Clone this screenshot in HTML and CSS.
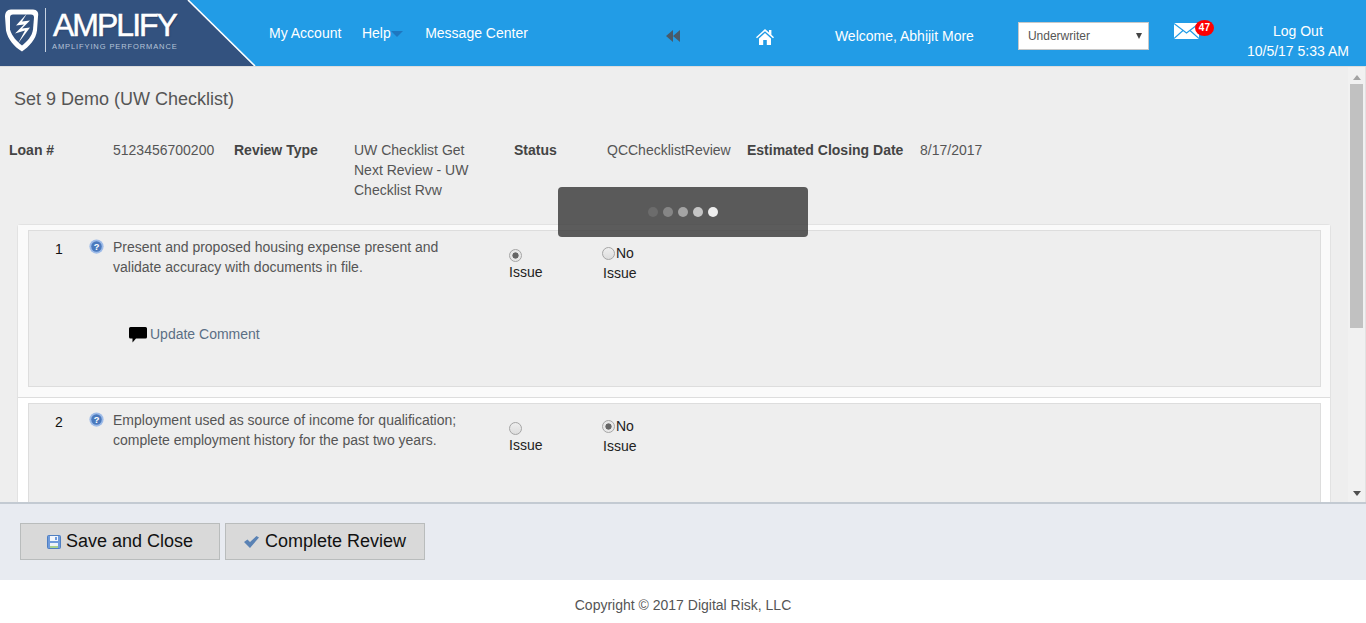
FILE: index.html
```html
<!DOCTYPE html>
<html lang="en">
<head>
<meta charset="utf-8">
<title>Set 9 Demo (UW Checklist)</title>
<link rel="stylesheet" href="styles.css">
</head>
<body>
<header class="topbar">
  <div class="brand">
    <svg class="brand-bg" width="256" height="66" viewBox="0 0 256 66" aria-hidden="true">
      <polygon points="0,0 188,0 254,66 0,66" fill="#33527f"/>
      <line x1="188" y1="0" x2="255" y2="66" stroke="#fff" stroke-width="1.6"/>
    </svg>
    <svg class="shield" width="34" height="43" viewBox="1 3 34 42" aria-hidden="true">
      <path d="M7 3 H29 C33 3 35 6 34 10 L33 24 C32 33 25 40 18 45 C10 40 4 33 2 24 L1 10 C1 6 3 3 7 3 Z" fill="#fff"/>
      <path d="M9 8 H27 C29 8 30 9 30 11 L29 23 C28 30 23 35 18 39 C13 35 8 30 6 23 L6 11 C6 9 7 8 9 8 Z" fill="#33527f"/>
      <path d="M23 7 L12 19 L20 18 L11 27 L21 24 L14 37 L26 21 L18 22 L26 14 L18 15 Z" fill="#fff"/>
    </svg>
    <span class="brand-rule"></span>
    <div class="brand-text">
      <span class="brand-name">AMPLIFY</span>
      <span class="brand-tag">AMPLIFYING PERFORMANCE</span>
    </div>
  </div>
  <nav class="nav">
    <a class="nav-link">My Account</a>
    <a class="nav-link nav-help">Help<span class="caret"></span></a>
    <a class="nav-link">Message Center</a>
  </nav>
  <svg class="rewind" width="14" height="12" viewBox="0 0 14 12" aria-hidden="true">
    <path d="M7 0 V12 L0 6 Z M14 0 V12 L7 6 Z" fill="#4a5a68"/>
  </svg>
  <svg class="home" width="18" height="16" viewBox="0 0 18 16" aria-hidden="true">
    <path d="M9 0 L13 3.6 V1 H15.4 V5.8 L18 8.2 L17 9.2 L9 2.2 L1 9.2 L0 8.2 Z M3 9.4 L9 4 L15 9.4 V16 H10.8 V11 H7.2 V16 H3 Z" fill="#fff"/>
  </svg>
  <span class="welcome">Welcome, Abhijit More</span>
  <div class="role"><span>Underwriter</span><span class="role-arrow"></span></div>
  <div class="mail">
    <svg width="25" height="16" viewBox="0 0 25 16" aria-hidden="true">
      <rect width="25" height="16" fill="#fff"/>
      <path d="M0 0.5 L12.5 10 L25 0.5 M0 15.5 L9 7.5 M25 15.5 L16 7.5" fill="none" stroke="#229ce6" stroke-width="1.2"/>
    </svg>
    <span class="badge">47</span>
  </div>
  <div class="session">
    <span>Log Out</span>
    <span>10/5/17 5:33 AM</span>
  </div>
</header>

<main class="workspace">
  <div class="content">
    <h1 class="title">Set 9 Demo (UW Checklist)</h1>
    <div class="meta">
      <b class="meta-loan">Loan #</b>
      <span class="meta-num">5123456700200</span>
      <b class="meta-type">Review Type</b>
      <span class="meta-typeval">UW Checklist Get Next Review - UW Checklist Rvw</span>
      <b class="meta-status">Status</b>
      <span class="meta-statusval">QCChecklistReview</span>
      <b class="meta-close">Estimated Closing Date</b>
      <span>8/17/2017</span>
    </div>
    <section class="panel">
      <div class="row-wrap first">
        <article class="item">
          <span class="num">1</span>
          <svg class="help" width="15" height="15" viewBox="0 0 16 16" aria-hidden="true"><circle cx="8" cy="8" r="7.6" fill="#9dbbe8"/><circle cx="8" cy="8" r="5.6" fill="#4a79bd"/><text x="8" y="11.5" text-anchor="middle" class="help-q">?</text></svg>
          <p class="question">Present and proposed housing expense present and validate accuracy with documents in file.</p>
          <div class="choice choice-issue"><span class="radio on"></span><span class="choice-label">Issue</span></div>
          <div class="choice choice-no"><span class="radio"></span><span class="no-word">No</span><span class="choice-label alt">Issue</span></div>
          <a class="comment">
            <svg width="18" height="17" viewBox="0 0 18 17" aria-hidden="true"><path d="M1.5 1 H16.5 A1.5 1.5 0 0 1 18 2.5 V11 A1.5 1.5 0 0 1 16.5 12.5 H7 L3.5 16.5 V12.5 H1.5 A1.5 1.5 0 0 1 0 11 V2.5 A1.5 1.5 0 0 1 1.5 1 Z" fill="#000"/></svg>
            Update Comment
          </a>
        </article>
      </div>
      <div class="row-wrap">
        <article class="item">
          <span class="num">2</span>
          <svg class="help" width="15" height="15" viewBox="0 0 16 16" aria-hidden="true"><circle cx="8" cy="8" r="7.6" fill="#9dbbe8"/><circle cx="8" cy="8" r="5.6" fill="#4a79bd"/><text x="8" y="11.5" text-anchor="middle" class="help-q">?</text></svg>
          <p class="question">Employment used as source of income for qualification; complete employment history for the past two years.</p>
          <div class="choice choice-issue"><span class="radio"></span><span class="choice-label">Issue</span></div>
          <div class="choice choice-no"><span class="radio on"></span><span class="no-word">No</span><span class="choice-label alt">Issue</span></div>
        </article>
      </div>
    </section>
  </div>
  <div class="scrollbar">
    <span class="arrow up"></span>
    <span class="thumb"></span>
    <span class="arrow down"></span>
  </div>
  <div class="loader">
    <i class="dot d1"></i><i class="dot d2"></i><i class="dot d3"></i><i class="dot d4"></i><i class="dot d5"></i>
  </div>
</main>

<div class="actions">
  <button class="btn" type="button">
    <svg class="btn-save" width="14" height="14" viewBox="0 0 14 14" aria-hidden="true"><rect x="0.5" y="0.5" width="13" height="13" rx="1" fill="#6f9bdb" stroke="#4f7fc2"/><rect x="3" y="1" width="8" height="5" fill="#f2f6fb"/><rect x="8" y="2" width="2" height="3" fill="#6f9bdb"/><rect x="3" y="8" width="8" height="5" fill="#eef3f8"/><rect x="3" y="11" width="8" height="2" fill="#a8d08d"/></svg>
    Save and Close
  </button>
  <button class="btn" type="button">
    <svg width="15" height="12" viewBox="0 0 15 12" aria-hidden="true"><path d="M0 6 L3.5 3.5 L6 6 L12.5 0 L15 1.5 L6 12 Z" fill="#5a82b4"/></svg>
    Complete Review
  </button>
</div>
<footer class="copyright">Copyright © 2017 Digital Risk, LLC</footer>
</body>
</html>
```
FILE: styles.css
```css
* { box-sizing: border-box; }
html, body { height: 100%; }
body {
  margin: 0;
  height: 623px;
  overflow: hidden;
  display: flex;
  flex-direction: column;
  font-family: "Liberation Sans", Arial, sans-serif;
  font-size: 14px;
  color: #555;
  background: #fff;
}
.topbar {
  flex: 0 0 66px;
  display: flex;
  align-items: center;
  background: #229ce6;
  color: #fff;
}
.brand {
  position: relative;
  flex: 0 0 256px;
  height: 66px;
  display: flex;
  align-items: center;
  padding: 0 0 6px 5px;
}
.brand-bg { position: absolute; left: 0; top: 0; }
.shield { position: relative; flex: none; }
.brand-rule {
  position: relative;
  width: 1px;
  height: 44px;
  margin-left: 6px;
  background: #c8d3e2;
}
.brand-text {
  position: relative;
  display: flex;
  flex-direction: column;
  margin-left: 6px;
}
.brand-name {
  margin-left: 1px;
  font-size: 32px;
  line-height: 31px;
  letter-spacing: -2px;
  color: #fff;
  -webkit-text-stroke: 0.5px #fff;
  text-shadow: 1px 1px 1px rgba(20, 40, 80, .5);
}
.brand-tag {
  font-size: 7.5px;
  line-height: 9px;
  margin-top: 1px;
  letter-spacing: 0.9px;
  color: #b6c4d8;
  white-space: nowrap;
}
.nav {
  flex: 0 0 auto;
  display: flex;
  gap: 20.5px;
  margin: 0 0 0 13px;
}
.nav-link { color: #fff; white-space: nowrap; }
.nav-help { display: inline-flex; align-items: center; margin-right: 2px; }
.caret {
  width: 0;
  height: 0;
  margin-top: 2px;
  border: 6px solid transparent;
  border-top: 6px solid #1e77c0;
  border-bottom: 0;
}
.rewind { margin: 5px 0 0 138px; flex: none; }
.home { margin: 7px 0 0 76px; flex: none; }
.welcome { margin: 6px 0 0 61px; white-space: nowrap; }
.role {
  flex: 0 0 131px;
  height: 28px;
  margin: 6px 0 0 44px;
  padding: 0 6px 0 9px;
  display: flex;
  align-items: center;
  justify-content: space-between;
  background: #fff;
  border: 1px solid #c8c8c8;
  color: #555;
  font-size: 12px;
}
.role-arrow {
  width: 0;
  height: 0;
  border: 3.5px solid transparent;
  border-top: 6px solid #444;
  border-bottom: 0;
}
.mail {
  position: relative;
  flex: none;
  height: 16px;
  margin: 0 0 4px 25px;
}
.mail svg { display: block; }
.badge {
  position: absolute;
  left: 21px;
  top: -3px;
  width: 19px;
  height: 16px;
  border-radius: 50%;
  background: #f00;
  color: #fff;
  font-size: 10px;
  font-weight: 700;
  line-height: 15px;
  text-align: center;
}
.session {
  flex: none;
  width: 104px;
  margin-left: 47px;
  display: flex;
  flex-direction: column;
  align-items: center;
  gap: 2px;
  line-height: 18px;
  margin-top: 15px;
  white-space: nowrap;
}
.workspace {
  position: relative;
  flex: 0 0 438px;
  display: flex;
  overflow: hidden;
  background: #eee;
  border-top: 1px solid #ddd;
  border-bottom: 2px solid #c3cad2;
}
.content {
  flex: 1;
  min-width: 0;
  padding: 0 17px 0 9px;
}
.title {
  margin: 21px 0 0 5px;
  font-size: 18px;
  font-weight: 400;
  line-height: 22px;
  color: #555;
}
.meta {
  display: flex;
  align-items: flex-start;
  margin-top: 30px;
  line-height: 20px;
}
.meta b { color: #444; white-space: nowrap; }
.meta-loan { flex: 0 0 104px; }
.meta-num { flex: 0 0 121px; }
.meta-type { flex: 0 0 120px; }
.meta-typeval { flex: 0 0 160px; padding-right: 30px; }
.meta-status { flex: 0 0 93px; }
.meta-statusval { flex: 0 0 140px; }
.meta-close { flex: 0 0 173px; }
.panel {
  margin: 24px 0 0 8px;
  background: #fff;
  border: 1px solid #e2e2e2;
  border-bottom: 0;
  border-radius: 4px 4px 0 0;
  height: 300px;
}
.row-wrap {
  padding: 5px 9px 10px 10px;
  height: 173px;
}
.row-wrap.first {
  background: #fafafa;
  border-bottom: 1px solid #ddd;
}
.item {
  position: relative;
  display: grid;
  grid-template-columns: 60px 24px 396px 93px 1fr;
  grid-template-rows: 90px 1fr;
  height: 157px;
  background: #eee;
  border: 1px solid #ddd;
  align-items: start;
}
.num {
  padding-top: 9px;
  text-align: center;
  color: #111;
  line-height: 18px;
}
.help { margin-top: 8px; }
.help-q { fill: #fff; font: 700 10px "Liberation Sans", Arial, sans-serif; }
.question {
  margin: 6px 0 0;
  padding-right: 30px;
  line-height: 20px;
  color: #555;
}
.choice {
  width: 50px;
  color: #222;
  line-height: 20px;
}
.choice-issue { padding-top: 18px; }
.choice-no { padding-top: 12px; white-space: nowrap; }
.choice-issue .radio { display: block; margin-bottom: 2px; }
.choice-label { display: block; line-height: 20px; margin-top: -2px; }
.choice-label.alt { margin: 0 0 0 1px; }
.no-word { margin-left: 1px; }
.radio {
  display: inline-block;
  width: 13px;
  height: 13px;
  border-radius: 50%;
  background: linear-gradient(#eee, #ddd);
  border: 1px solid #a5a5a5;
  vertical-align: -2px;
}
.radio.on {
  background: radial-gradient(circle, #666 0 2.8px, #e8e8e8 3.4px);
}
.comment {
  grid-column: 1 / -1;
  grid-row: 2;
  margin: 3px 0 0 100px;
  display: flex;
  align-items: center;
  gap: 3px;
  color: #5b6f85;
  line-height: 20px;
}
.scrollbar {
  flex: 0 0 18px;
  display: flex;
  flex-direction: column;
  align-items: center;
  background: #f1f1f1;
  border-right: 1px solid #e2e2e2;
  position: relative;
}
.arrow {
  width: 0;
  height: 0;
  border: 4px solid transparent;
}
.arrow.up { margin-top: 8px; border-bottom: 5px solid #a3a3a3; border-top: 0; }
.arrow.down { margin-top: auto; margin-bottom: 6px; border-top: 5px solid #505050; border-bottom: 0; }
.thumb {
  width: 13px;
  height: 244px;
  margin-top: 4px;
  background: #c1c1c1;
}
.loader {
  position: absolute;
  left: 558px;
  top: 120px;
  width: 250px;
  height: 50px;
  display: flex;
  align-items: center;
  justify-content: center;
  gap: 5px;
  background: rgba(65, 65, 65, .86);
  border-radius: 4px;
}
.dot { width: 10px; height: 10px; border-radius: 50%; background: #eee; }
.d1 { opacity: .12; }
.d2 { opacity: .3; }
.d3 { opacity: .5; }
.d4 { opacity: .72; }
.d5 { opacity: 1; }
.actions {
  flex: 0 0 76px;
  display: flex;
  align-items: flex-start;
  gap: 5px;
  padding: 19px 0 0 20px;
  background: #e8ebf1;
}
.btn {
  width: 200px;
  height: 37px;
  display: flex;
  align-items: center;
  justify-content: center;
  gap: 6px;
  padding: 0;
  background: #d9d9d9;
  border: 1px solid #b9bcbc;
  color: #111;
  font: 18px "Liberation Sans", Arial, sans-serif;
}
.btn-save { margin-right: -1px; }
.copyright {
  flex: 1;
  padding-top: 16px;
  text-align: center;
  line-height: 18px;
  color: #555;
}
```
